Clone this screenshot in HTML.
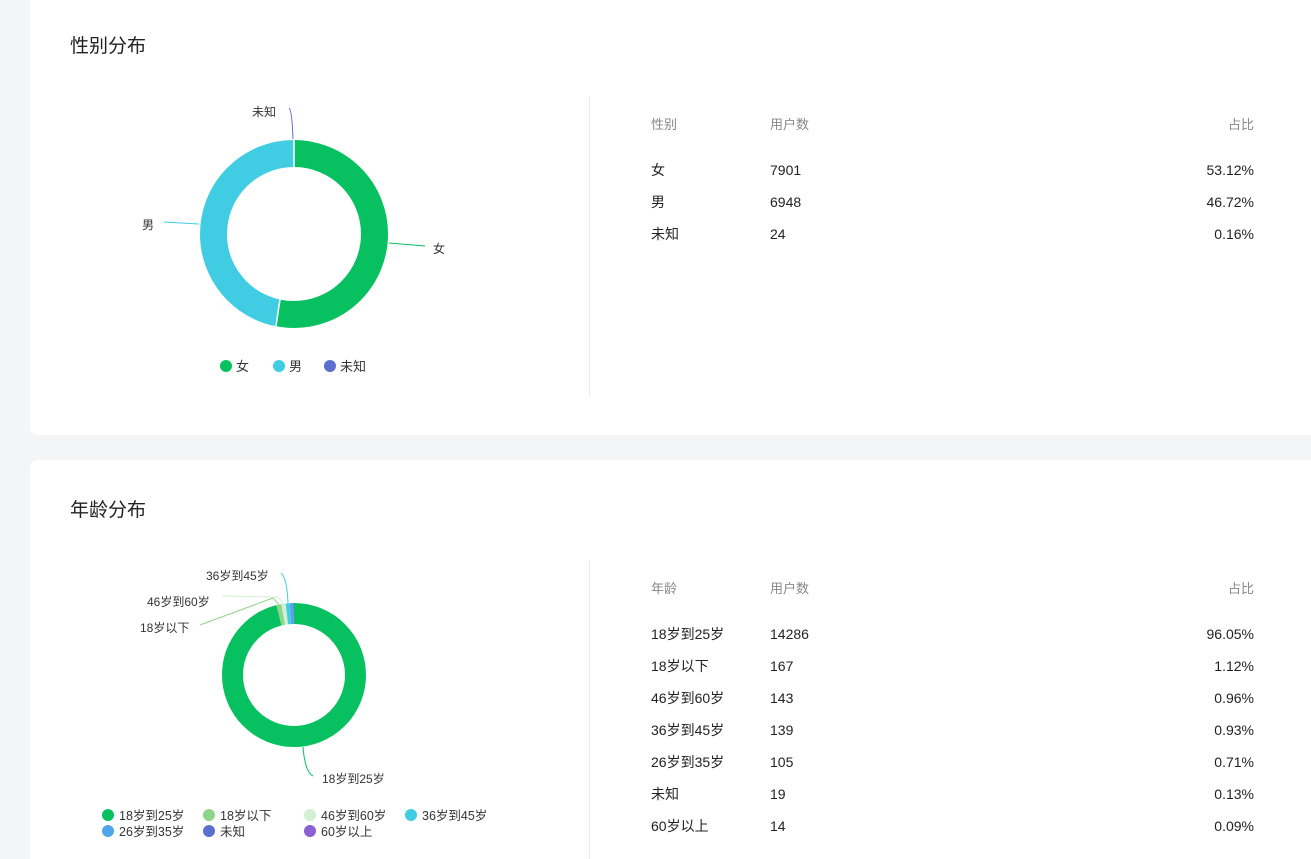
<!DOCTYPE html>
<html><head><meta charset="utf-8"><style>
*{margin:0;padding:0;box-sizing:border-box}
html,body{width:1311px;height:859px;overflow:hidden}
body{background:#f4f5f7;font-family:"Liberation Sans","Noto Sans CJK SC",sans-serif;color:#222;position:relative}
.card{position:absolute;left:30px;width:1300px;background:#fff;border-radius:8px}
.tx{position:absolute;font-size:14px;white-space:nowrap;line-height:16px}
.h{color:#888;font-size:13px}
.r{text-align:right;width:120px}
svg{position:absolute;left:0;top:0}
</style></head><body>
<div class="card" style="top:0;height:435px;border-top-left-radius:0;border-top-right-radius:0"></div>
<div class="card" style="top:460px;height:399px;border-bottom-left-radius:0"></div>
<div class="tx" style="left:70px;top:36px;font-size:19px;line-height:22px">性别分布</div>
<div class="tx" style="left:70px;top:500px;font-size:19px;line-height:22px">年龄分布</div>
<div style="position:absolute;left:589px;top:96px;width:1px;height:299px;background:#e8e8e8"></div>
<div style="position:absolute;left:589px;top:560px;width:1px;height:299px;background:#e8e8e8"></div>

<svg width="1311" height="859" font-family="Liberation Sans, Noto Sans CJK SC, sans-serif" font-size="12" fill="#333">
<g transform="rotate(-90 294 234)" fill="none" stroke-width="27">
<circle cx="294" cy="234" r="80.5" stroke="#07c160" stroke-dasharray="268.7 505.8"/>
<circle cx="294" cy="234" r="80.5" stroke="#40cde3" stroke-dasharray="236.3 505.8" stroke-dashoffset="-268.7"/>
<circle cx="294" cy="234" r="80.5" stroke="#5b6fd0" stroke-dasharray="0.9 505.8" stroke-dashoffset="-505"/>
</g>
<line x1="294" y1="140" x2="294" y2="167" stroke="#fff" stroke-width="1.5"/>
<line x1="276" y1="326" x2="280" y2="299" stroke="#fff" stroke-width="1.5"/>
<path d="M389 243 L425 246" stroke="#07c160" fill="none"/>
<path d="M199 224 L164 222" stroke="#40cde3" fill="none"/>
<path d="M293 139 Q292 110 289 108" stroke="#5b6fd0" fill="none"/>
<text x="433" y="253">女</text><text x="142" y="229">男</text><text x="252" y="116">未知</text>
<circle cx="226" cy="366" r="6" fill="#07c160"/><text x="236" y="371" font-size="13">女</text>
<circle cx="279" cy="366" r="6" fill="#40cde3"/><text x="289" y="371" font-size="13">男</text>
<circle cx="330" cy="366" r="6" fill="#5b6fd0"/><text x="340" y="371" font-size="13">未知</text>

<g transform="rotate(-90 294 675)" fill="none" stroke-width="21">
<circle cx="294" cy="675" r="61.5" stroke="#07c160" stroke-dasharray="371.1 386.4"/>
<circle cx="294" cy="675" r="61.5" stroke="#8fd48b" stroke-dasharray="4.3 386.4" stroke-dashoffset="-371.1"/>
<circle cx="294" cy="675" r="61.5" stroke="#d1efd2" stroke-dasharray="3.7 386.4" stroke-dashoffset="-375.4"/>
<circle cx="294" cy="675" r="61.5" stroke="#40cde3" stroke-dasharray="3.6 386.4" stroke-dashoffset="-379.1"/>
<circle cx="294" cy="675" r="61.5" stroke="#4ea6ea" stroke-dasharray="2.7 386.4" stroke-dashoffset="-382.7"/>
<circle cx="294" cy="675" r="61.5" stroke="#5b6fd0" stroke-dasharray="0.6 386.4" stroke-dashoffset="-385.4"/>
<circle cx="294" cy="675" r="61.5" stroke="#8b5fd1" stroke-dasharray="0.4 386.4" stroke-dashoffset="-386"/>
</g>
<path d="M303 747 Q305 772 313 776" stroke="#07c160" fill="none"/>
<path d="M279 605 Q275 600 273 598 L200 625" stroke="#8fd48b" fill="none"/>
<path d="M283 604 Q280 598 277 597 L222 596" stroke="#d1efd2" fill="none"/>
<path d="M288 603 Q287 578 281 573" stroke="#40cde3" fill="none"/>
<text x="322" y="783">18岁到25岁</text>
<text x="140" y="632">18岁以下</text>
<text x="147" y="606">46岁到60岁</text>
<text x="206" y="580">36岁到45岁</text>
<g font-size="12.5">
<circle cx="108" cy="815" r="6" fill="#07c160"/><text x="119" y="820">18岁到25岁</text>
<circle cx="209" cy="815" r="6" fill="#8fd48b"/><text x="220" y="820">18岁以下</text>
<circle cx="310" cy="815" r="6" fill="#d1efd2"/><text x="321" y="820">46岁到60岁</text>
<circle cx="411" cy="815" r="6" fill="#40cde3"/><text x="422" y="820">36岁到45岁</text>
<circle cx="108" cy="831" r="6" fill="#4ea6ea"/><text x="119" y="836">26岁到35岁</text>
<circle cx="209" cy="831" r="6" fill="#5b6fd0"/><text x="220" y="836">未知</text>
<circle cx="310" cy="831" r="6" fill="#8b5fd1"/><text x="321" y="836">60岁以上</text>
</g>
</svg>

<div class="tx h" style="left:651px;top:117px">性别</div>
<div class="tx h" style="left:770px;top:117px">用户数</div>
<div class="tx h r" style="left:1134px;top:117px">占比</div>
<div class="tx" style="left:651px;top:162px">女</div><div class="tx" style="left:770px;top:162px">7901</div><div class="tx r" style="left:1134px;top:162px">53.12%</div>
<div class="tx" style="left:651px;top:194px">男</div><div class="tx" style="left:770px;top:194px">6948</div><div class="tx r" style="left:1134px;top:194px">46.72%</div>
<div class="tx" style="left:651px;top:226px">未知</div><div class="tx" style="left:770px;top:226px">24</div><div class="tx r" style="left:1134px;top:226px">0.16%</div>

<div class="tx h" style="left:651px;top:581px">年龄</div>
<div class="tx h" style="left:770px;top:581px">用户数</div>
<div class="tx h r" style="left:1134px;top:581px">占比</div>
<div class="tx" style="left:651px;top:626px">18岁到25岁</div><div class="tx" style="left:770px;top:626px">14286</div><div class="tx r" style="left:1134px;top:626px">96.05%</div>
<div class="tx" style="left:651px;top:658px">18岁以下</div><div class="tx" style="left:770px;top:658px">167</div><div class="tx r" style="left:1134px;top:658px">1.12%</div>
<div class="tx" style="left:651px;top:690px">46岁到60岁</div><div class="tx" style="left:770px;top:690px">143</div><div class="tx r" style="left:1134px;top:690px">0.96%</div>
<div class="tx" style="left:651px;top:722px">36岁到45岁</div><div class="tx" style="left:770px;top:722px">139</div><div class="tx r" style="left:1134px;top:722px">0.93%</div>
<div class="tx" style="left:651px;top:754px">26岁到35岁</div><div class="tx" style="left:770px;top:754px">105</div><div class="tx r" style="left:1134px;top:754px">0.71%</div>
<div class="tx" style="left:651px;top:786px">未知</div><div class="tx" style="left:770px;top:786px">19</div><div class="tx r" style="left:1134px;top:786px">0.13%</div>
<div class="tx" style="left:651px;top:818px">60岁以上</div><div class="tx" style="left:770px;top:818px">14</div><div class="tx r" style="left:1134px;top:818px">0.09%</div>
</body></html>
